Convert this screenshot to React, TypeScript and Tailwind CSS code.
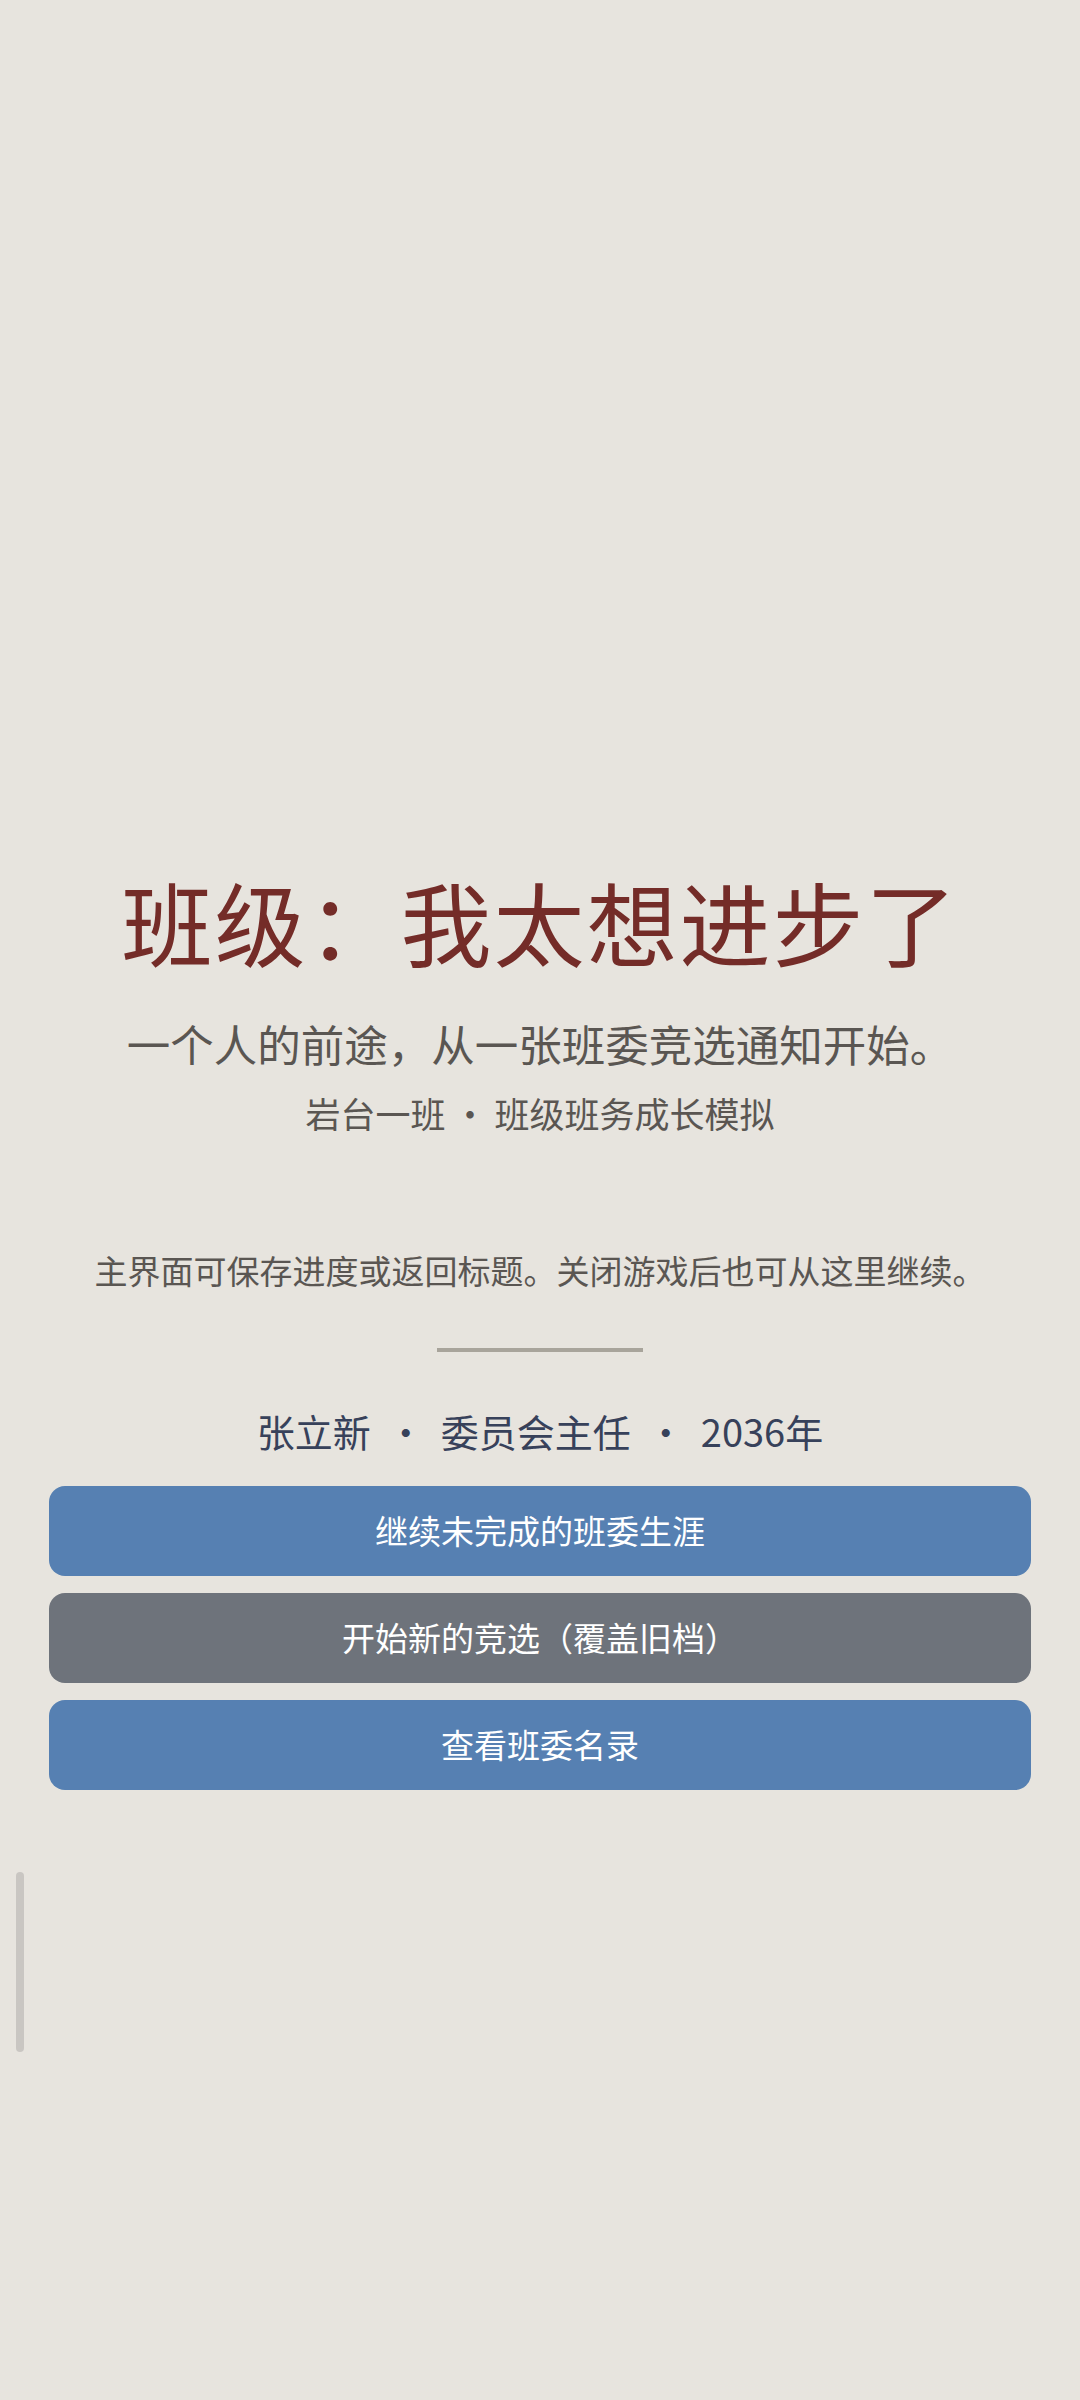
import React from 'react';

const FONT = { fontFamily: '"Noto Sans CJK SC", "Noto Sans", sans-serif' };

const buttons = [
  { label: '继续未完成的班委生涯', tone: 'bg-[#5680b2]' },
  { label: '开始新的竞选（覆盖旧档）', tone: 'bg-[#6e737b]' },
  { label: '查看班委名录', tone: 'bg-[#5680b2]' },
];

export default function App() {
  return (
    <div className="relative min-h-[2400px] w-full bg-[#e7e4de] overflow-hidden" style={FONT}>
      {/* scroll thumb */}
      <div className="absolute left-[16px] top-[1872px] h-[180px] w-[8px] rounded-full bg-[#c9c6c2]" />

      <div className="flex flex-col items-center pt-[866px] px-[49px]">
        <h1 className="text-[91px] leading-[108px] font-normal tracking-[2px] text-[#742c28]">
          班级：我太想进步了
        </h1>
        <p className="mt-[40px] text-[43.5px] leading-[60px] text-[#5a5652]">
          一个人的前途，从一张班委竞选通知开始。
        </p>
        <p className="mt-[15px] flex items-center gap-[7px] text-[35px] leading-[48px] text-[#5a5652]">
          <span>岩台一班</span>
          <span>·</span>
          <span>班级班务成长模拟</span>
        </p>
        <p className="mt-[110px] text-[33px] leading-[46px] text-[#5a5652]">
          主界面可保存进度或返回标题。关闭游戏后也可从这里继续。
        </p>
        <div className="mt-[55px] h-[4px] w-[206px] bg-[#a8a49b]" />
        <div className="mt-[52px] flex items-center gap-[16px] text-[38px] leading-[54px] text-[#37415a]">
          <span>张立新</span>
          <span>·</span>
          <span>委员会主任</span>
          <span>·</span>
          <span>2036年</span>
        </div>
        <div className="mt-[28px] flex w-full flex-col gap-[17px]">
          {buttons.map((b) => (
            <button
              key={b.label}
              className={`h-[90px] w-full rounded-[16px] ${b.tone} text-[33px] text-white`}
            >
              {b.label}
            </button>
          ))}
        </div>
      </div>
    </div>
  );
}
